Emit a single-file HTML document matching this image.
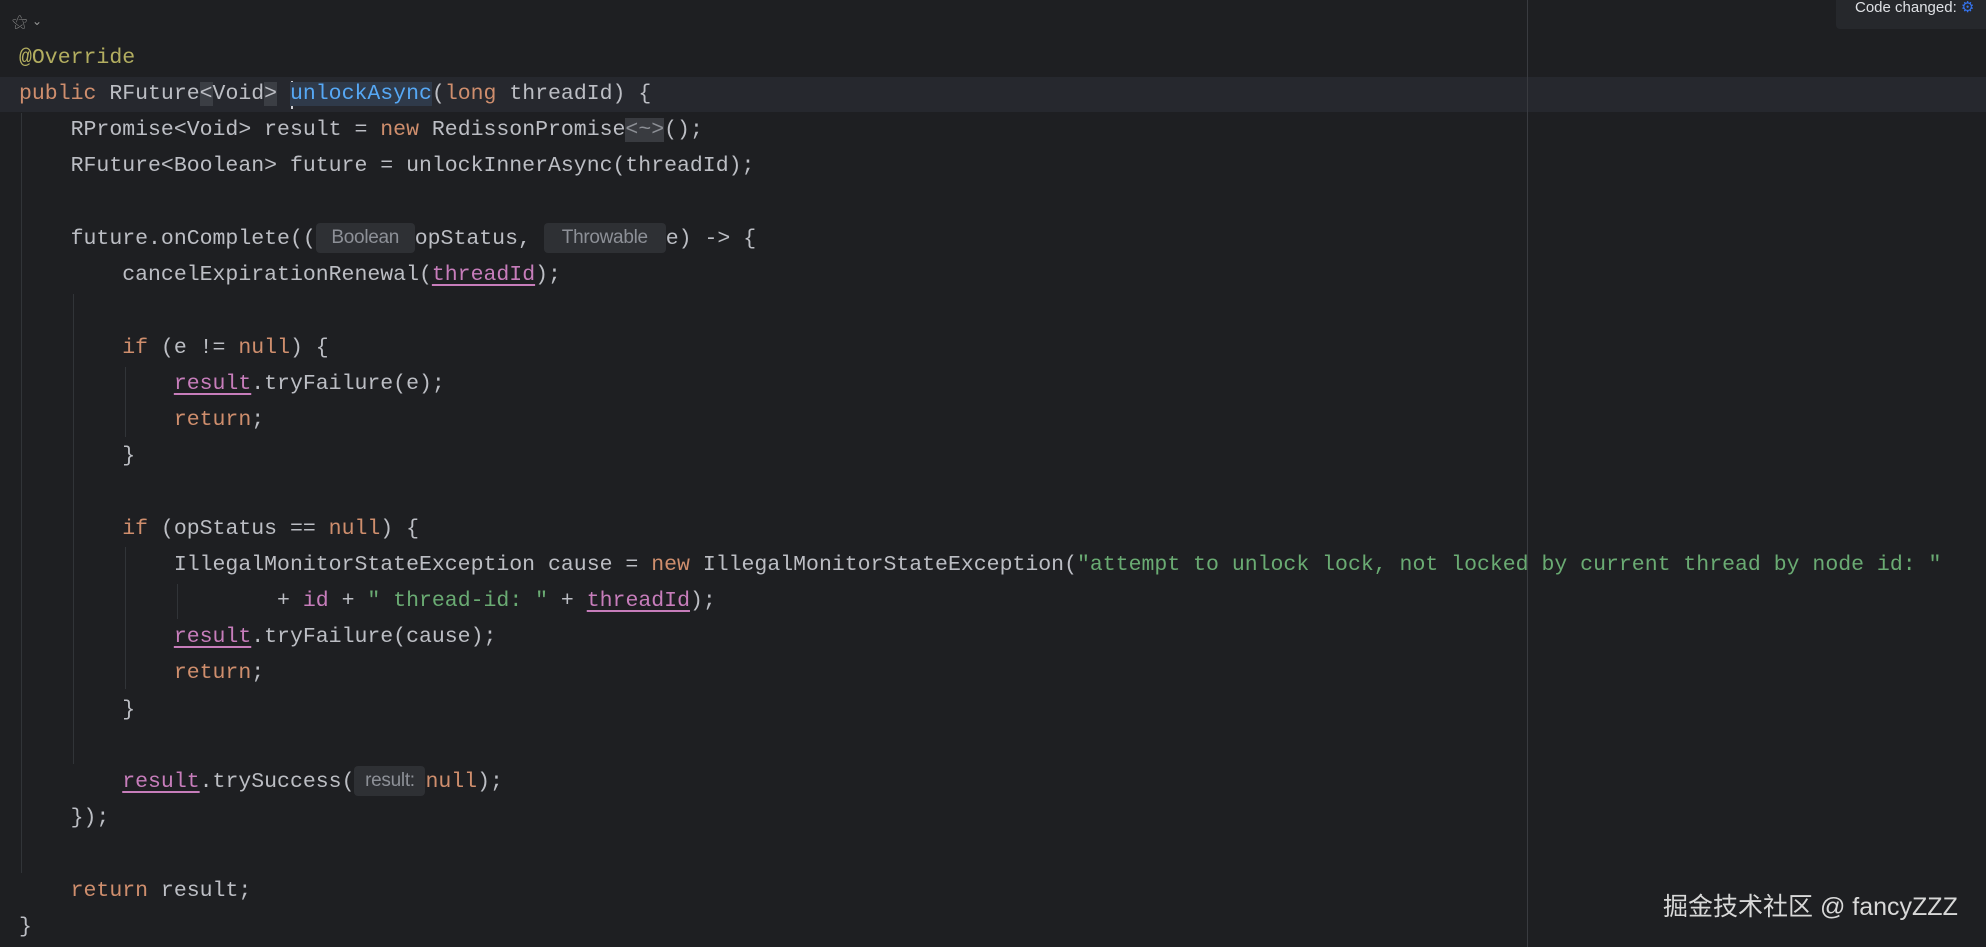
<!DOCTYPE html>
<html><head><meta charset="utf-8"><style>
html,body{margin:0;padding:0;background:#1e1f22;width:1986px;height:947px;overflow:hidden;position:relative}
.l{position:absolute;left:19px;height:36px;line-height:36px;font-family:"Liberation Mono",monospace;font-size:21.5px;color:#bcbec4;white-space:pre}
.k{color:#cf8e6d}.a{color:#b3ae60}.s{color:#6aab73}.m{color:#56a8f5}.p{color:#c77dbb}
.u{text-decoration:underline;text-decoration-color:#c77dbb;text-underline-offset:4px}
.h{display:inline-block;background:#2e3034;color:#8d9097;font-family:"Liberation Sans",sans-serif;font-size:19px;line-height:30px;height:30px;text-align:center;border-radius:4px;vertical-align:middle;letter-spacing:-0.3px}
.g{position:absolute;width:1px;background:#313438}
</style></head><body>
<div style="position:absolute;left:0;top:77px;width:1986px;height:35px;background:#26282e"></div>
<div style="position:absolute;left:1527px;top:0;width:1px;height:947px;background:#393b40"></div>
<div style="position:absolute;left:1836px;top:0;width:150px;height:29px;background:#26282c;border-radius:0 0 0 4px"></div>
<div style="position:absolute;left:1855px;top:0;height:24px;line-height:16px;font-family:'Liberation Sans',sans-serif;font-size:15px;color:#dfe1e5">Code changed: <span style="color:#3574f0">⚙</span></div>
<div style="position:absolute;left:12px;top:12px;width:18px;height:20px;color:#888;font-size:16px;font-family:'DejaVu Sans',sans-serif;line-height:20px">⚝</div>
<div style="position:absolute;left:32px;top:14px;color:#999;font-size:12px;font-family:'DejaVu Sans',sans-serif">⌄</div>
<div class="g" style="left:21px;top:113px;height:760px"></div>
<div class="g" style="left:73px;top:294px;height:470px"></div>
<div class="g" style="left:125px;top:367px;height:70px"></div>
<div class="g" style="left:125px;top:547px;height:142px"></div>
<div class="g" style="left:177px;top:584px;height:35px"></div>
<div style="position:absolute;left:291px;top:81px;width:2px;height:28px;background:#ced0d6"></div>
<div class="l" style="top:40px"><span class="a">@Override</span></div>
<div class="l" style="top:76px"><span class="k">public</span> RFuture<span style="background:#3b3e44">&lt;</span>Void<span style="background:#3b3e44">&gt;</span> <span class="m" style="background:#2f3a4a">unlockAsync</span>(<span class="k">long</span> threadId) {</div>
<div class="l" style="top:112px">    RPromise&lt;Void&gt; result = <span class="k">new</span> RedissonPromise<span style="background:#393b40;color:#8c8f95">&lt;~&gt;</span>();</div>
<div class="l" style="top:148px">    RFuture&lt;Boolean&gt; future = unlockInnerAsync(threadId);</div>
<div class="l" style="top:221px">    future.onComplete((<span class="h" style="width:99px">Boolean</span>opStatus, <span class="h" style="width:122px">Throwable</span>e) -&gt; {</div>
<div class="l" style="top:257px">        cancelExpirationRenewal(<span class="p u">threadId</span>);</div>
<div class="l" style="top:330px">        <span class="k">if</span> (e != <span class="k">null</span>) {</div>
<div class="l" style="top:366px">            <span class="p u">result</span>.tryFailure(e);</div>
<div class="l" style="top:402px">            <span class="k">return</span>;</div>
<div class="l" style="top:438px">        }</div>
<div class="l" style="top:511px">        <span class="k">if</span> (opStatus == <span class="k">null</span>) {</div>
<div class="l" style="top:547px">            IllegalMonitorStateException cause = <span class="k">new</span> IllegalMonitorStateException(<span class="s">"attempt to unlock lock, not locked by current thread by node id: "</span></div>
<div class="l" style="top:583px">                    + <span class="p">id</span> + <span class="s">" thread-id: "</span> + <span class="p u">threadId</span>);</div>
<div class="l" style="top:619px">            <span class="p u">result</span>.tryFailure(cause);</div>
<div class="l" style="top:655px">            <span class="k">return</span>;</div>
<div class="l" style="top:692px">        }</div>
<div class="l" style="top:764px">        <span class="p u">result</span>.trySuccess(<span class="h" style="width:71px">result:</span><span class="k">null</span>);</div>
<div class="l" style="top:800px">    });</div>
<div class="l" style="top:873px">    <span class="k">return</span> result;</div>
<div class="l" style="top:909px">}</div>
<div style="position:absolute;left:1663px;top:892px;font-family:'Liberation Sans','Noto Sans CJK SC',sans-serif;font-size:25px;line-height:30px;color:#d8d8d8">掘金技术社区 @ fancyZZZ</div>
</body></html>
